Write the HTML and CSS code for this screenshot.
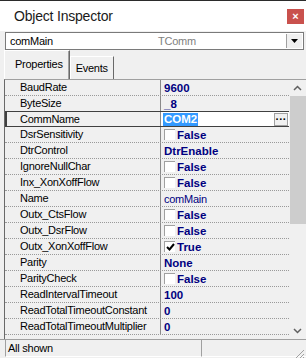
FILE: index.html
```html
<!DOCTYPE html>
<html lang="en">
<head>
    <meta charset="UTF-8">
    <title>Object Inspector</title>
    <link rel="stylesheet" href="styles.css">
</head>
<body>
    <div id="window">
        <div id="titlebar">
            <span class="title">Object Inspector</span>
            <span class="close">×</span>
        </div>
        <div id="combo">
            <span class="combo-name">comMain</span>
            <span class="combo-type">TComm</span>
            <span class="combo-btn"><svg width="7" height="4" viewBox="0 0 7 4"><path d="M0 0h7L3.5 4z" fill="#000"/></svg></span>
        </div>
        <div id="tabs">
            <span class="tab active">Properties</span>
            <span class="tab">Events</span>
        </div>
        <div id="grid-wrap">
            <div id="grid">
                <div class="row"><div class="name">BaudRate</div><div class="value">9600</div></div>
                <div class="row"><div class="name">ByteSize</div><div class="value">_8</div></div>
                <div class="row selected"><div class="name">CommName</div><div class="value edit"><span class="hl">COM2</span><span class="dots">···</span></div></div>
                <div class="row"><div class="name">DsrSensitivity</div><div class="value"><span class="check"></span>False</div></div>
                <div class="row"><div class="name">DtrControl</div><div class="value">DtrEnable</div></div>
                <div class="row"><div class="name">IgnoreNullChar</div><div class="value"><span class="check"></span>False</div></div>
                <div class="row"><div class="name">Inx_XonXoffFlow</div><div class="value"><span class="check"></span>False</div></div>
                <div class="row"><div class="name">Name</div><div class="value plain">comMain</div></div>
                <div class="row"><div class="name">Outx_CtsFlow</div><div class="value"><span class="check"></span>False</div></div>
                <div class="row"><div class="name">Outx_DsrFlow</div><div class="value"><span class="check"></span>False</div></div>
                <div class="row"><div class="name">Outx_XonXoffFlow</div><div class="value"><span class="check on"><svg width="9" height="8" viewBox="0 0 9 8"><path d="M1 4l2.5 2.5L8 1" stroke="#000" stroke-width="2" fill="none"/></svg></span>True</div></div>
                <div class="row"><div class="name">Parity</div><div class="value">None</div></div>
                <div class="row"><div class="name">ParityCheck</div><div class="value"><span class="check"></span>False</div></div>
                <div class="row"><div class="name">ReadIntervalTimeout</div><div class="value">100</div></div>
                <div class="row"><div class="name">ReadTotalTimeoutConstant</div><div class="value">0</div></div>
                <div class="row"><div class="name">ReadTotalTimeoutMultiplier</div><div class="value">0</div></div>
            </div>
            <div id="scrollbar">
                <div class="arrow"><svg width="9" height="6" viewBox="0 0 9 6"><path d="M1 5l3.5-3.5L8 5" stroke="#606060" stroke-width="1.5" fill="none"/></svg></div>
                <div class="track">
                    <div class="thumb"></div>
                </div>
                <div class="arrow"><svg width="9" height="6" viewBox="0 0 9 6"><path d="M1 1l3.5 3.5L8 1" stroke="#606060" stroke-width="1.5" fill="none"/></svg></div>
            </div>
        </div>
        <div id="statusbar">
            <div class="panel">All shown</div>
            <div class="panel rest"></div>
            <svg class="grip" width="12" height="12" viewBox="0 0 12 12"><path d="M11 3L3 11M11 7L7 11M11 10L10 11" stroke="#a0a0a0" stroke-width="1"/></svg>
        </div>
    </div>
</body>
</html>
```
FILE: styles.css
```css
body {
    margin: 0;
    font-family: "Liberation Sans", Arial, sans-serif;
    font-size: 11px;
    background: #f0f0f0;
}
#window {
    width: 306px;
    height: 358px;
    background: #f0f0f0;
    border-top: 1px solid #2b2b2b;
    box-sizing: border-box;
    overflow: hidden;
}
#titlebar {
    height: 30px;
    background: #fff;
    display: flex;
    align-items: center;
    justify-content: space-between;
    padding: 0 2px 0 14px;
}
#titlebar .title {
    font-size: 14px;
    color: #1a1a1a;
    letter-spacing: -0.2px;
}
#titlebar .close {
    width: 17px;
    height: 15px;
    background: #c9514d;
    color: #fff;
    font-size: 11px;
    font-weight: bold;
    display: flex;
    align-items: center;
    justify-content: center;
}
#combo {
    margin: 1px 2px 0 5px;
    height: 16px;
    border: 1px solid #7a7a7a;
    background: #fff;
    display: flex;
    align-items: center;
    letter-spacing: -0.25px;
}
#combo .combo-name {
    width: 148px;
    padding-left: 4px;
}
#combo .combo-type {
    flex: 1;
    color: #808080;
}
#combo .combo-btn {
    width: 15px;
    height: 14px;
    margin-right: 1px;
    border-left: 1px solid #a0a0a0;
    background: #f0f0f0;
    display: flex;
    align-items: center;
    justify-content: center;
}
#tabs {
    height: 29px;
    display: flex;
    align-items: flex-end;
    padding-left: 4px;
    letter-spacing: -0.25px;
}
#tabs .tab {
    height: 22px;
    padding: 0 5px;
    display: flex;
    align-items: center;
    border-left: 1px solid #fff;
    border-top: 1px solid #fff;
    border-right: 1px solid #696969;
}
#tabs .tab.active {
    height: 26px;
    padding: 0 6px 2px 10px;
    box-shadow: inset -1px 0 #a0a0a0;
}
#grid-wrap {
    display: flex;
    height: 259px;
    margin-left: 4px;
    border-top: 1px solid #a0a0a0;
    border-left: 1px solid #696969;
}
#grid {
    flex: 1;
    letter-spacing: -0.25px;
}
.row {
    display: flex;
    height: 15px;
    border-bottom: 1px dotted #9a9a9a;
}
.row .name {
    width: 140px;
    padding-left: 15px;
    line-height: 15px;
    color: #000;
    white-space: nowrap;
}
.row .value {
    flex: 1;
    border-left: 1px solid #8a8a8a;
    padding-left: 3px;
    display: flex;
    align-items: center;
    font-weight: bold;
    font-size: 11.5px;
    color: #000080;
    letter-spacing: 0;
}
.row .value.plain {
    font-weight: normal;
    font-size: 11px;
    letter-spacing: -0.25px;
}
.row.selected {
    border-top: 1px solid #404040;
    border-bottom: 1px solid #404040;
    height: 14px;
    margin-top: -1px;
    position: relative;
}
.row.selected::before {
    content: "";
    position: absolute;
    left: 0;
    top: 0;
    width: 2px;
    height: 14px;
    background: #404040;
}
.row .value.edit {
    background: #fff;
    justify-content: space-between;
    padding-right: 0;
}
.hl {
    background: #3399ff;
    color: #fff;
    line-height: 13px;
    padding: 0 1px;
    margin-left: -1px;
}
.dots {
    width: 14px;
    height: 13px;
    border: 1px solid #a0a0a0;
    background: #f0f0f0;
    color: #000;
    font-size: 11px;
    line-height: 11px;
    text-align: center;
    box-sizing: border-box;
    margin-right: 1px;
}
.check {
    width: 10px;
    height: 10px;
    background: #fff;
    border-top: 1px solid #a0a0a0;
    border-left: 1px solid #a0a0a0;
    margin-right: 2px;
    display: flex;
    align-items: center;
    justify-content: center;
}
#scrollbar {
    width: 17px;
    display: flex;
    flex-direction: column;
    background: #f0f0f0;
}
#scrollbar .arrow {
    height: 16px;
    display: flex;
    align-items: center;
    justify-content: center;
}
#scrollbar .track {
    flex: 1;
}
#scrollbar .thumb {
    height: 128px;
    margin-left: 1px;
    background: #cdcdcd;
}
#statusbar {
    height: 20px;
    display: flex;
    align-items: flex-start;
    padding-left: 5px;
    border-top: 1px solid #a0a0a0;
    position: relative;
}
#statusbar .panel {
    width: 193px;
    height: 16px;
    line-height: 16px;
    padding-left: 2px;
    border-left: 1px solid #a0a0a0;
    border-bottom: 1px solid #fff;
    letter-spacing: -0.25px;
}
#statusbar .panel.rest {
    flex: 1;
    width: auto;
}
#statusbar .grip {
    position: absolute;
    right: 1px;
    bottom: 1px;
}
```
